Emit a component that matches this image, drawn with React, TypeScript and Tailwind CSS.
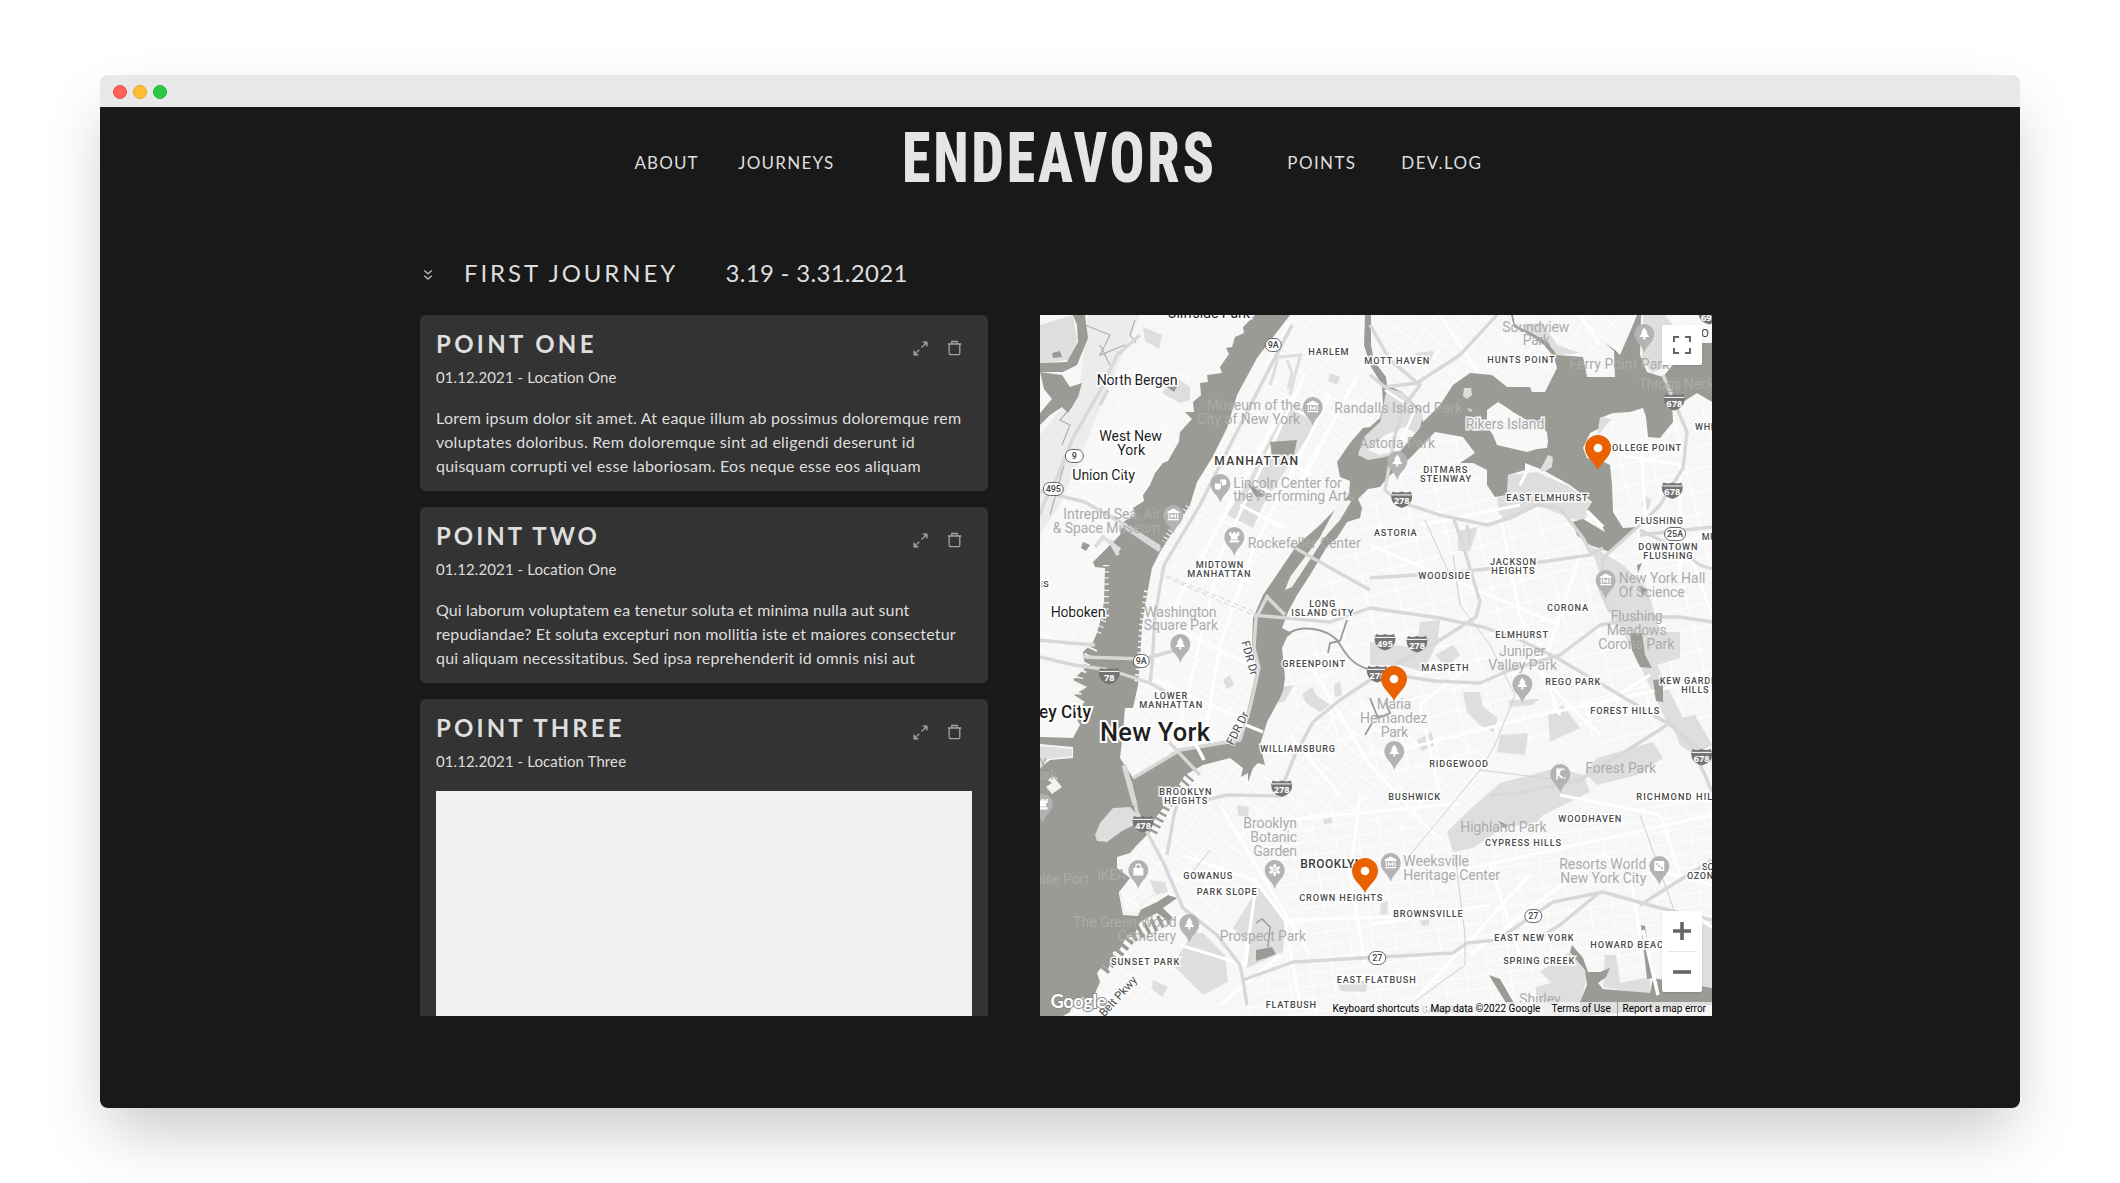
import type { ReactNode } from 'react';

type Label = [text: string, x: number, width: number, y: number];

const TOWNS: Label[] = [
  ['Cliffside Park', 127.3, 82.7, 3],
  ['North Bergen', 56.7, 81, 70],
  ['West New', 59.3, 62.7, 126],
  ['York', 77.3, 28, 140],
  ['Union City', 32.3, 62.7, 165],
  ['Hoboken', 10.7, 55, 302],
];

const AREAS: Label[] = [
  ['HARLEM', 268.3, 40.3, 40.3], ['MOTT HAVEN', 324.3, 65, 49.3], ['HUNTS POINT', 447.3, 67.3, 48.3],
  ['DITMARS', 383.3, 44, 158.3], ['STEINWAY', 380, 51, 167], ['EAST ELMHURST', 466.3, 81.3, 185.7],
  ['COLLEGE POINT', 565.5, 75.5, 136], ['FLUSHING', 594.7, 48.3, 209], ['DOWNTOWN', 598.3, 59.3, 235.3],
  ['FLUSHING', 603.3, 49.3, 244], ['ASTORIA', 334, 42.7, 221], ['MIDTOWN', 155.7, 47.7, 253],
  ['MANHATTAN', 147.3, 63.3, 262], ['LONG', 269.3, 26, 292], ['ISLAND CITY', 251.3, 62, 301.3],
  ['GREENPOINT', 242.3, 62.7, 352], ['LOWER', 114.3, 33, 384], ['MANHATTAN', 99.3, 63, 393],
  ['WILLIAMSBURG', 220.3, 74.7, 437], ['BROOKLYN', 119.3, 52.3, 480], ['HEIGHTS', 124.3, 43, 489],
  ['JACKSON', 450, 46, 250.3], ['HEIGHTS', 451.3, 43.3, 259], ['WOODSIDE', 378.3, 51.7, 264],
  ['CORONA', 507, 41, 296], ['ELMHURST', 455.3, 52.7, 323], ['MASPETH', 381.3, 47.3, 356],
  ['REGO PARK', 505.3, 55, 370], ['FOREST HILLS', 550.3, 69, 399], ['KEW GARDENS', 619.7, 70, 369],
  ['HILLS', 641.3, 27.3, 378], ['RIDGEWOOD', 389.3, 58.7, 452], ['BUSHWICK', 348.3, 51.7, 485],
  ['RICHMOND HILL', 596.3, 82, 485], ['WOODHAVEN', 518.3, 63, 507], ['CYPRESS HILLS', 445, 76, 531],
  ['BROWNSVILLE', 353.3, 69.3, 602], ['EAST NEW YORK', 454.3, 79.3, 626], ['SPRING CREEK', 463.3, 71, 649],
  ['HOWARD BEACH', 550.3, 80, 633], ['GOWANUS', 143.3, 49, 564], ['PARK SLOPE', 156.7, 60, 580],
  ['CROWN HEIGHTS', 259.3, 83, 586], ['SUNSET PARK', 71, 68.3, 650], ['EAST FLATBUSH', 296.7, 79, 668],
  ['FLATBUSH', 225.7, 50.3, 693], ['SOUTH', 662, 30, 555], ['OZONE PARK', 647, 60, 564],
  ['WHITESTONE', 655, 62, 115], ['MURRAY HILL', 661.7, 62, 224.7], ['CANARSIE', 381.7, 48, 698],
];

const PLACES: Label[] = [
  ['Museum of the', 166.7, 93.7, 95], ['City of New York', 157.3, 102.7, 109],
  ['Randalls Island Park', 294.3, 128, 98], ['Soundview', 462.3, 67, 16.5], ['Park', 482.7, 27.3, 30],
  ['Ferry Point Park', 529.3, 100, 53.5], ['Throgs Neck', 598.7, 76, 73.5],
  ['Astoria Park', 319.3, 75.7, 132.5], ['Lincoln Center for', 193.3, 108.5, 172.5],
  ['the Performing Arts', 193.3, 121, 186], ['Rockefeller Center', 207.7, 113, 232.5],
  ['Intrepid Sea, Air', 23.3, 97, 203.5], ['& Space Museum', 12.7, 107.7, 217.5],
  ['Washington', 104.3, 72.3, 301.5], ['Square Park', 103.7, 74.3, 315],
  ['Maria', 336.7, 34.3, 394], ['Hernandez', 320, 67.3, 408], ['Park', 340.7, 27.3, 422],
  ['Juniper', 459, 46.3, 341], ['Valley Park', 448.3, 68.7, 355],
  ['New York Hall', 578.7, 86.7, 268], ['Of Science', 578.7, 66, 282],
  ['Flushing', 570.7, 52, 306], ['Meadows', 566.7, 60, 320], ['Corona Park', 558.3, 76, 334],
  ['Forest Park', 545.3, 70.7, 458], ['Highland Park', 420.3, 86.3, 517],
  ['Weeksville', 363.3, 65.7, 551], ['Heritage Center', 363.3, 96.7, 565],
  ['Resorts World', 519.3, 87, 554], ['New York City', 520.3, 86, 568],
  ['Brooklyn', 203.3, 53.7, 513], ['Botanic', 210.3, 46.7, 527], ['Garden', 213.3, 43.7, 541],
  ['Prospect Park', 179.7, 86.3, 626], ['The Green-Wood', 33.3, 103.3, 612], ['Cemetery', 77.7, 58.3, 626],
  ['IKEA', 57.3, 28.7, 565], ['Cruise Port', -19, 68, 569], ['ty', -6, 12, 451], ['Park', -10, 27.3, 465],
  ['Shirley', 479.3, 41.3, 689],
];

type Glyph = 'tree' | 'museum' | 'castle' | 'masks' | 'flower' | 'bag' | 'dice' | 'golf';
const SPOTS: [number, number, Glyph][] = [
  [272.7, 92, 'museum'], [180.3, 169, 'masks'], [133.3, 200, 'museum'], [194.3, 222, 'castle'],
  [140.3, 329, 'tree'], [604.3, 19, 'tree'], [357.3, 146, 'tree'], [565.7, 265, 'museum'],
  [482.3, 369, 'tree'], [354.3, 436, 'tree'], [520.3, 459, 'golf'], [350.7, 548, 'museum'],
  [619.3, 551, 'dice'], [234.7, 555, 'flower'], [149.3, 609, 'tree'], [98.3, 555, 'bag'], [2.7, 489, 'castle'],
];

const ROUND_SHIELDS: [string, number, number, number][] = [
  ['9A', 233.3, 30, 16], ['9A', 101.3, 346, 16], ['9', 34.3, 141, 18], ['495', 13.3, 174, 20],
  ['25A', 635, 219, 21], ['27', 493.3, 601, 17], ['27', 337.3, 643, 17],
];
const INTERSTATES: [string, number, number][] = [
  ['278', 361.7, 184.5], ['678', 634.3, 87], ['678', 632.3, 175.5], ['78', 69.3, 361], ['495', 345, 327],
  ['278', 377, 329], ['278', 337.3, 359], ['678', 661.7, 442], ['278', 241.7, 473.5], ['478', 103, 509], ['695', 669, 1],
];

const WATER =
  'M215 0 203 12 204 18 195 22 192 32 186 33 189 39 180 52 182 58 167 60 168 67 160 68 161 80 153 87 154 97 145 97 152 104 140 117 139 127 133 137 128 146 123 148 115 158 110 170 103 180 104 186 93 193 95 200 83 207 80 220 70 230 53 247 55 252 65 253 64 287 60 307 57 318 53 327 43 337 45 353 33 365 47 372 34 380 45 387 33 397 40 410 33 423 0 422 0 429 33 432 33 443 10 445 0 453 0 701 23 701 30 697 33 686 43 682 50 690 60 667 57 658 63 650 68 655 73 637 80 634 87 620 94 621 100 607 117 598 128 606 133 603 123 593 137 583 128 580 117 587 100 595 98 601 83 600 79 577 90 563 77 553 77 542 90 538 97 530 110 517 114 505 123 493 122 480 120 475 137 473 145 460 163 450 190 443 203 453 201 462 208 458 208 467 213 453 218 448 225 450 220 430 227 407 240 383 243 376 245 363 242 333 247 322 252 318 242 313 248 297 257 280 270 260 288 230 297 223 307 207 320 203 322 193 318 184 328 174 340 172 347 163 370 143 395 117 423 122 435 138 420 148 433 148 447 155 447 170 455 182 467 180 468 160 485 155 485 148 503 155 530 170 552 187 547 195 563 213 565 217 543 204 532 207 537 220 550 230 570 237 590 220 597 212 583 213 573 197 572 170 570 150 560 145 547 143 543 133 550 118 560 113 560 103 573 98 590 97 603 93 606 102 608 122 620 123 633 107 632 87 643 87 657 78 672 87 672 28 655 28 630 53 623 62 607 57 600 40 601 0 597 0 590 17 580 40 575 35 565 28 574 36 575 62 547 62 543 42 517 40 507 27 490 17 475 10 473 0 471 0 474 12 490 20 504 30 514 42 517 53 505 77 492 77 490 72 467 72 452 60 430 58 413 70 400 90 383 107 380 95 362 77 347 70 346 62 334 46 331 30 331 0 325 0 324 30 330 50 342 70 343 90 340 103 330 112 323 113 310 128 297 147 300 162 310 166 309 180 280 210 257 230 223 280 213 303 212 333 217 353 208 393 200 423 163 430 133 437 113 453 93 463 80 443 83 417 85 393 93 393 98 370 100 347 102 310 107 280 112 253 120 237 150 190 157 167 172 143 187 113 197 80 217 43 250 0Z';

const HIGHWAYS = [
  'M77 40 62 72 33 123 18 160 3 190 0 200', 'M100 20 77 40 M68 75 60 90 M0 176 45 187 82 208 120 232',
  'M0 342 34 350 70 355 110 368 132 380 M-2 325 30 328 55 330 M43 342 104 344 140 334',
  'M90 466 97 497 107 517 123 547 143 593 177 620 200 650 203 665 253 647 340 642 413 638 427 628 457 625 513 587 563 577 620 593 672 605',
  'M203 665 207 690 M187 480 240 481 M243 470 255 440 273 407 300 385 333 363 363 345 397 327 436 302 440 287 423 230 414 205',
  'M213 300 290 307 330 293 400 303 443 312 480 325 517 343 563 370 630 410 667 440 672 445',
  'M250 230 285 250 330 275 M330 263 420 257 480 250 550 240 563 233', 'M226 281 245 300',
  'M360 187 400 200 447 210 470 203 497 190 520 193 543 223 552 240',
  'M623 60 647 117 643 153 620 190 603 207 563 243 560 275 570 297', 'M355 360 395 366 440 368 470 355 520 340 560 310 610 302 640 302 672 307',
  'M450 480 480 478 540 465 580 440 627 410', 'M627 403 650 430 665 460 672 477', 'M457 0 420 40 377 68 345 72 330 60 M330 10 350 45 380 70 365 90 355 120 345 175 362 190',
  'M600 215 640 235 660 250 672 254 M600 220 672 212', 'M427 210 430 230 M560 577 520 610 495 625 M600 590 672 545',
  'M110 368 112 350 115 300 124 250 160 190 185 140 225 62 252 10',
  'M93 463 115 450 140 435 200 425 210 393 219 353 214 333 216 303 228 280 M127 540 134 500 140 480 M138 473 165 485 187 480',
];

const PARKS = [
  '187,200 213,213 223,190 270,118 277,100 250,88 230,123 210,163', '0,10 33,0 37,25 30,45 0,48', '103,12 122,20 119,34 105,26',
  '133,60 150,72 150,85 140,88 122,78', '290,58 300,62 297,70 288,66', '220,570 245,603 243,637 207,653 210,630 193,613',
  '153,617 163,618 185,640 188,667 163,680 133,650', '113,665 128,672 122,682 112,674',
  '550,230 583,250 607,273 620,317 640,317 640,343 617,350 630,377 643,403 627,407 603,357 583,317 567,293 562,265',
  '557,443 613,427 623,443 597,460 557,470 545,458', '460,468 517,453 543,460 550,477 503,500 497,507 463,513 433,533 413,537 407,517 427,497',
  '380,307 400,305 398,327 383,357 360,350 330,350 330,327 377,333', '395,340 413,330 420,340 406,352',
  '423,377 440,377 443,392 458,403 453,417 440,410 427,397', '508,400 523,390 540,413 510,427', '460,420 488,418 485,440 457,437',
  '468,385 500,384 492,390 470,392', '468,160 497,157 530,172 553,190 543,207 530,203 497,190 460,207 457,183 467,180',
  '480,10 503,8 517,30 540,38 517,40 505,27', '375,38 394,36 390,48 380,50', '418,216 438,212 430,236 418,236', '262,379 272,372 276,380 290,390 280,397 266,388',
  '294,370 300,366 302,380 295,382', '183,365 190,360 194,370 187,374', '197,490 209,492 208,502 198,500', '283,505 292,502 292,508 284,509',
  '500,657 530,637 543,645 548,657 540,690 520,701 505,701 495,672 512,668', '565,640 576,640 580,668 610,662 610,680 563,672',
  '663,607 672,608 672,675 650,668', '377,425 392,417 394,430 382,436', '603,180 612,185 608,195 602,192', '603,0 625,0 640,20 630,50 612,58 602,45',
  '298,668 328,665 326,677 300,676', '380,606 389,604 389,610 382,611', '341,588 348,586 347,600 340,599', '110,565 125,567 128,577 115,580', '630,405 655,400 672,430 655,440 640,430', '240,372 254,370 245,386 238,388',
];

const DARK = [
  'M33 0 45 0 48 23 37 50 23 57 0 57 0 48 27 47 38 27 37 10Z', 'M0 57 22 60 30 72 42 68 38 82 28 98 22 92 10 100 0 110 0 98 12 84 4 74Z',
  'M12 38 20 36 22 42 13 43Z', 'M230 127 257 125 254 140 232 141Z', 'M127 72 138 70 134 77Z', 'M207 168 216 174 224 180 216 182Z',
  'M590 318 602 318 605 340 612 353 600 352 592 335Z', 'M613 365 623 364 623 387 616 386Z', 'M216 635 232 632 236 639 226 643 216 646Z',
  'M532 630 543 643 548 657 560 657 570 653 566 662 558 668 563 674 610 678 613 663 672 673 672 690 540 701 540 687 547 670 545 655 530 637Z',
  'M601 610 605 611 613 663 607 664Z M449 660 460 664 475 690 466 688Z', 'M458 506 468 510 464 513Z M597 250 602 248 598 258Z M600 272 607 274 602 281Z', 'M43 227 50 230 46 236 41 233Z',
];

function FitText({ data, className, size }: { data: Label[]; className: string; size: number }) {
  return (
    <g className={className} fontSize={size}>
      {data.map(([t, x, w, y], i) => (
        <text key={i} x={x} y={y} textLength={w}>{t}</text>
      ))}
    </g>
  );
}

function SpotGlyph({ kind }: { kind: Glyph }) {
  switch (kind) {
    case 'tree':
      return <path d="M0-6.5 3.4-1.5H2L5 3H1V5.5H-1V3H-5L-2-1.5H-3.4Z" />;
    case 'museum':
      return (
        <>
          <path d="M0-6.5-6-3.2V-2H6V-3.2Z M-5.5 4H5.5V5.3H-5.5Z M-5-1.4H-3.8V3.5H-5Z M3.8-1.4H5V3.5H3.8Z" />
          <path d="M-2 3.2V-.4L0 1.8 2-.4V3.2" fill="none" stroke="#fff" strokeWidth="1.2" />
        </>
      );
    case 'castle':
      return <path d="M-5-5H-3V-3.5H-1V-5H1V-3.5H3V-5H5V-1H3.2L3.6 2.5H-3.6L-3.2-1H-5Z M-4.8 3.3H4.8V5.5H-4.8Z" />;
    case 'masks':
      return <path d="M-5.5-.5H.6V3A3 2.6 0 0 1-5.5 3Z M0-4.5H6V-.8A3 2.6 0 0 1 1.6 1.2V-1.4H0Z" />;
    case 'flower':
      return (
        <>
          {[0, 60, 120, 180, 240, 300].map((a) => (
            <ellipse key={a} cx="0" cy="-3.7" rx="1.5" ry="2.3" transform={`rotate(${a})`} />
          ))}
          <circle r="1.1" />
        </>
      );
    case 'bag':
      return (
        <>
          <path d="M-5-2H5V5.5H-5Z" />
          <path d="M-2.4-2V-3.5A2.4 2.4 0 0 1 2.4-3.5V-2" fill="none" stroke="#fff" strokeWidth="1.3" />
        </>
      );
    case 'dice':
      return (
        <>
          <rect x="-5" y="-5" width="10" height="10" rx="1" />
          <g fill="#b3b3b3"><circle cx="-2.5" cy="-2" r="1.1" /><circle r="1.1" /><circle cx="2.5" cy="2.2" r="1.1" /></g>
        </>
      );
    case 'golf':
      return <path d="M-4-5.5H4V-4H1L-1 0 3 3.5 2 5 -2.4 1.6V5.5H-4Z M3.5 3.5H5V5H3.5Z" />;
  }
}

function Marker({ x, y }: { x: number; y: number }) {
  return (
    <g transform={`translate(${x} ${y})`}>
      <path d="M0 22C-3 14.5-13 9-13 0A13 13 0 0 1 13 0C13 9 3 14.5 0 22Z" fill="#ea6200" />
      <circle r="4.3" fill="#fff" />
    </g>
  );
}

function CityMap() {
  return (
    <svg viewBox="0 0 672 701" className="block h-full w-full font-['Roboto',sans-serif]">
      <defs>
        <pattern id="manhattan" width="17" height="7" patternUnits="userSpaceOnUse" patternTransform="rotate(29)">
          <path d="M0 0H17M0 0V7" stroke="#fff" strokeWidth="1.6" />
        </pattern>
        <pattern id="jersey" width="5" height="14" patternUnits="userSpaceOnUse" patternTransform="rotate(28)">
          <path d="M0 0H5M0 0V14" stroke="#fff" strokeWidth="1.4" />
        </pattern>
        <pattern id="queens" width="31" height="22" patternUnits="userSpaceOnUse" patternTransform="rotate(-14)">
          <path d="M0 0H31M0 0V22" stroke="#fff" strokeWidth="2.4" />
        </pattern>
        <pattern id="bushwick" width="24" height="15" patternUnits="userSpaceOnUse" patternTransform="rotate(38)">
          <path d="M0 0H24M0 0V15" stroke="#fff" strokeWidth="1.8" />
        </pattern>
        <pattern id="brooklyn" width="22" height="13" patternUnits="userSpaceOnUse" patternTransform="rotate(-8)">
          <path d="M0 0H22M0 0V13" stroke="#fff" strokeWidth="1.8" />
        </pattern>
      </defs>
      <rect width="672" height="701" fill="#f7f7f7" />
      <path d="M48 0 100 0 80 45 20 190 0 220V120L40 70Z" fill="#ececec" />
      <path d="M40 8 70 20 60 40 85 30 M60 30 70 50 M22 130 30 110 20 105 33 90 M10 200 24 150 M95 5 90 20 96 28" fill="none" stroke="#b0b0ab" strokeWidth="1.2" />
      <path d="M94 45 150 60 130 135 30 330 0 340V230L60 120Z" fill="url(#jersey)" />
      <path d="M250 0 325 0 340 100 297 147 300 170 213 303 215 350 200 423 133 437 93 463 85 400 112 253Z" fill="url(#manhattan)" />
      <path d="M331 0H672V60L460 60 383 100Z" fill="url(#bushwick)" />
      <path d="M245 330 330 190 400 110 672 90V430H460L330 470 245 380Z" fill="url(#queens)" />
      <path d="M220 420 330 380 460 440 420 530 300 500 200 560 150 640 90 701H0L130 480Z" fill="url(#bushwick)" />
      <path d="M200 500 330 490 420 530 672 480V640L400 701H200L250 600Z" fill="url(#brooklyn)" />
      <g fill="#dedede">{PARKS.map((p) => <polygon key={p} points={p} />)}</g>
      <path d="M230 70 234 58 238 42 262 40 M250 80 255 60 260 42 M247 45 252 58 248 74" fill="none" stroke="#dedede" strokeWidth="3" />
      <g fill="none" stroke="#fff" strokeWidth="3">
        <path d="M232 138 272 160 M214 168 252 190 M200 190 244 212 M250 92 275 105 M165 245 213 268 M130 310 208 350 M115 365 205 405" />
        <path d="M245 90 130 300 M265 60 180 240 170 285 140 410 M290 80 215 230 180 330 165 420 M318 60 260 170" />
        <path d="M142 540 215 565 245 605 260 690 M180 490 270 640 M320 480 310 560 325 650 M330 610 450 590 M245 605 420 600 M250 505 420 488 M216 570 205 650 140 630 M240 640 180 690 M270 350 330 450 395 520 M250 420 300 480" />
        <path d="M380 210 480 190 M330 230 520 310 M460 200 480 300 520 400 M340 440 500 400 640 370 M400 480 380 390 430 350 M540 240 500 360 560 420 M400 560 672 500 M430 640 560 540 672 570 M370 690 490 560 M450 550 480 640 M520 480 620 500 640 560 M590 560 600 620 M600 110 605 200 M640 150V260 M580 140 640 150 M400 0 440 60 M540 0 560 30 M480 170 490 150 M640 210 672 300 M545 400 610 360" />
        <path d="M603 610 620 701M547 195 565 215" />
      </g>
      <path d={WATER} fill="#9a9b94" />
      <g fill="#9a9b94">{DARK.map((d) => <path key={d} d={d} />)}</g>
      <path d="M249 318C262 310 285 313 297 325C305 337 310 350 331 355M300 326 290 328 288 338M300 326 307 305M330 383 338 403 350 398 346 388M325 420 332 408" fill="none" stroke="#9a9b94" strokeWidth="1.8" />
      <path d="M216 608 222 604 230 612 228 632" fill="none" stroke="#9a9b94" strokeWidth="1.5" />
      <g fill="none" stroke="#f4f4f4" strokeWidth="10">
        <path d="M109 276 104 312 102 345 99 368" strokeDasharray="1.6 4" />
        <path d="M53 333 38 362 36 382 34 396" strokeDasharray="2 6" />
        <path d="M150 193 138 208 126 228" strokeDasharray="1.2 3" />
        <path d="M66 250 66 300 58 318" strokeDasharray="1.2 5" strokeWidth="6" />
      </g>
      <g fill="none" stroke="#9a9b94" strokeWidth="11">
        <path d="M63 655 90 622 128 603" strokeDasharray="3.5 4" strokeWidth="13" />
        <path d="M112 517 126 490 150 462" strokeDasharray="2.5 4" />
        <path d="M208 30 186 68 160 95" strokeDasharray="1.5 6" strokeWidth="8" />
      </g>
      <path d="M80 235 63 222 55 232M70 225 78 240" fill="none" stroke="#dedede" strokeWidth="4" />
      <path d="M300 185 312 185 300 205 285 222 252 272 245 275 250 262 280 222Z" fill="#f4f4f4" />
      <path d="M347 73 362 77 383 100 380 113 360 137 345 142 328 145 318 140 323 123 340 107 343 92Z" fill="#dedede" />
      <path d="M345 120 365 112 375 118 360 135 340 140 328 135Z" fill="#f8f8f8" />
      <path d="M345 75 375 95 355 140" fill="none" stroke="#fff" strokeWidth="2.5" />
      <path d="M447 95 458 87 466 92 473 97 490 107 500 111 507 117 508 127 507 133 497 134 487 137 457 130 453 120 447 112Z" fill="#f8f8f8" />
      <path d="M424 73 431 73 432 80 427 84 423 81Z M427 93 433 95 430 97Z M560 102 572 104 563 114 557 122Z M500 155 508 140 513 142 512 152 504 157Z" fill="#dedede" />
      <path d="M55 520 60 508 73 493 90 492 100 502 94 510 82 516 67 527 57 526Z" fill="#dedede" />
      <path d="M80 577 84 598 98 598 103 588 116 578" fill="none" stroke="#f0f0f0" strokeWidth="2.5" />
      <path d="M0 431 32 434 32 441 8 444 0 452Z" fill="#dedede" />
      <path d="M6 472 16 465 22 472 12 479Z M8 465 13 460 18 464 12 468Z" fill="#f4f4f4" />
      <path d="M573 108 603 95 605 120 573 145Z" fill="#f8f8f8" />
      <g fill="none" stroke="#d8d8d8" strokeWidth="3.4" strokeLinejoin="round">
        {HIGHWAYS.map((d) => <path key={d} d={d} />)}
        <path d="M83 210 120 235 M95 490 84 450" strokeWidth="5" />
        <path d="M127 425 160 460" />
      </g>
      <path d="M155 428 164 445M206 410 223 417M547 196 563 212M660 604 672 612M603 615 618 680" stroke="#fff" strokeWidth="3.5" fill="none" />
      <path d="M125 262 213 300M120 258 213 296" stroke="#dcdcdc" strokeWidth="1.2" strokeDasharray="5 3" />
      <path d="M413 240 420 290 450 330 475 380 455 430 440 455 370 540M440 455 520 465M415 540 425 620 425 650 370 690M600 500 650 640M385 205 410 260M150 560 170 535" fill="none" stroke="#cfcfcf" strokeWidth="1" />

      {SPOTS.map(([x, y, kind], i) => (
        <g key={i} transform={`translate(${x} ${y})`} fill="#fff">
          <path d="M0 19C-2 11-10 8-10 0A10 10 0 0 1 10 0C10 8 2 11 0 19Z" fill="#b3b3b3" />
          <SpotGlyph kind={kind} />
        </g>
      ))}
      <FitText data={PLACES} size={14} className="fill-[#ababab]" />
      <FitText data={[['Rikers Island', 425.7, 78.7, 113.7]]} size={14} className="fill-[#a8a8a8] stroke-[#f4f4f4] stroke-3 [paint-order:stroke]" />
      <FitText data={AREAS} size={9.2} className="fill-[#4a4a4a] stroke-white/90 stroke-3 font-medium [paint-order:stroke]" />
      <FitText data={[['MANHATTAN', 174.3, 83.7, 150], ['BROOKLYN', 260.3, 63, 553]]} size={12} className="fill-[#3c3c3c] stroke-white/90 stroke-3 font-medium [paint-order:stroke]" />
      <FitText data={TOWNS} size={14.3} className="fill-[#1f1f1f] stroke-white stroke-3 [paint-order:stroke]" />
      <FitText data={[['OC', 661, 18, 22], ['rs', 1, 8, 272]]} size={11.5} className="fill-[#3c3c3c] stroke-white stroke-3 [paint-order:stroke]" />
      <FitText data={[['ey City', -1, 52, 402.7]]} size={17.5} className="fill-[#1f1f1f] stroke-white stroke-4 font-medium [paint-order:stroke]" />
      <FitText data={[['New York', 60, 110, 426]]} size={25.5} className="fill-[#1f1f1f] stroke-white stroke-4 font-medium [paint-order:stroke]" />
      <g fontSize="11.5" textAnchor="middle" className="fill-[#4a4a4a] stroke-white/80 stroke-2 [paint-order:stroke]">
        <text transform="translate(206 344) rotate(74)">FDR Dr</text>
        <text transform="translate(201 415) rotate(-63)">FDR Dr</text>
        <text transform="translate(81 684) rotate(-48)">Belt Pkwy</text>
      </g>
      {ROUND_SHIELDS.map(([t, x, y, w], i) => (
        <g key={i} transform={`translate(${x} ${y})`}>
          <rect x={-w / 2} y="-6.5" width={w} height="13" rx="6.5" fill="#fff" stroke="#666" />
          <text y="3.2" textAnchor="middle" fontSize="9" fill="#444" className="font-medium">{t}</text>
        </g>
      ))}
      {INTERSTATES.map(([t, x, y], i) => (
        <g key={i} transform={`translate(${x} ${y})`}>
          <path d="M-9-8Q-4.5-6 0-8 4.5-6 9-8L10.5-4Q11 5.5 0 8.5-11 5.5-10.5-4Z" fill="#757575" />
          <path d="M-10-4.6H10" stroke="#fff" strokeWidth="1" />
          <text y="4.6" textAnchor="middle" fontSize="9.3" fill="#fff" className="font-['Open_Sans',sans-serif] font-bold">{t}</text>
        </g>
      ))}
      <Marker x={558} y={133} />
      <Marker x={354} y={364} />
      <Marker x={325} y={556} />
      <text x="10.5" y="693" textLength="56" fontSize="18.5" className="fill-white stroke-[#8c8c8c] stroke-2 font-['Lato',sans-serif] font-bold [paint-order:stroke]">Google</text>
    </svg>
  );
}

function ExpandIcon() {
  return (
    <svg viewBox="0 0 15 15" className="size-[15px]" fill="none" stroke="currentColor" strokeWidth="1.3">
      <path d="M8.5 6.5 13 2M6.2 8.8 2 13" />
      <path d="M9.6 1.2H13.8V5.4M1.2 9.6V13.8H5.4" />
      <path d="M11 1.2H13.8V4ZM1.2 11V13.8H4Z" fill="currentColor" strokeWidth=".6" />
    </svg>
  );
}

function TrashIcon() {
  return (
    <svg viewBox="0 0 15 16" className="h-4 w-[15px]" fill="none" stroke="currentColor" strokeWidth="1.3">
      <path d="M.8 4H14.2M4.8 4V1.5H10.2V4" />
      <path d="M2.2 4V13.2A1.5 1.5 0 0 0 3.7 14.7H11.3A1.5 1.5 0 0 0 12.8 13.2V4" />
    </svg>
  );
}

function PointCard({ title, titleClass, meta, children, fixed = true }: {
  title: string; titleClass: string; meta: string; children: ReactNode; fixed?: boolean;
}) {
  return (
    <article className={fixed ? 'h-44 shrink-0 rounded-md bg-[#333333] px-4 pt-[13px]' : 'shrink-0 rounded-md bg-[#333333] px-4 pt-[13px] pb-4'}>
      <div className="flex justify-between">
        <h2 className={`text-2xl leading-8 font-bold whitespace-nowrap ${titleClass}`}>{title}</h2>
        <div className="mt-3 mr-2.5 flex h-4 items-center gap-[19px] text-[#a3a3a3]">
          <ExpandIcon />
          <TrashIcon />
        </div>
      </div>
      <p className="mt-[5px] text-[15px] leading-6 tracking-[0.1px]">{meta}</p>
      {children}
    </article>
  );
}

export default function App() {
  return (
    <div className="h-[1183px] w-[2120px] overflow-hidden bg-white px-[100px] pt-[75px] font-['Lato',sans-serif] text-[#dedede]">
      <div className="flex h-[1033px] flex-col rounded-lg shadow-[0_30px_60px_-8px_rgba(0,0,0,0.22)]">
        <div className="flex h-8 shrink-0 items-center gap-[6.6px] rounded-t-lg bg-[#e8e8e8] pt-0.5 pl-[13.3px]">
          <span className="size-[13.4px] rounded-full border border-[#e8524a] bg-[#ff5f57]" />
          <span className="size-[13.4px] rounded-full border border-[#e5a52c] bg-[#febc2e]" />
          <span className="size-[13.4px] rounded-full border border-[#22b33a] bg-[#28c840]" />
        </div>

        <div className="flex-1 rounded-b-lg bg-[#191919]">
          <header className="flex h-[150px] items-start pt-[15px] pl-[534.5px] text-[17px] leading-6 whitespace-nowrap">
            <a className="mt-[28.5px] w-[103.8px] tracking-[1.1px]">ABOUT</a>
            <a className="mt-[28.5px] w-[163.5px] tracking-[1.25px]">JOURNEYS</a>
            <h1 className="w-[385.5px] origin-left scale-x-[0.817] font-['Roboto_Condensed','Roboto',sans-serif] text-[71px] leading-none font-extrabold tracking-[3.4px] text-[#e5e5e5]">ENDEAVORS</h1>
            <a className="mt-[28.5px] w-[114px] tracking-[1.4px]">POINTS</a>
            <a className="mt-[28.5px] tracking-[1.4px]">DEV.LOG</a>
          </header>

          <div className="flex h-8 items-center pl-[323px] text-2xl leading-8 whitespace-nowrap">
            <svg viewBox="0 0 10 12" className="mt-[3px] h-3 w-2.5" fill="none" stroke="#b5b5b5" strokeWidth="1.4">
              <path d="M1.2 1.5 5 4.8 8.8 1.5M1.2 6.8 5 10.1 8.8 6.8" />
            </svg>
            <span className="ml-[31px] w-[261.5px] tracking-[2.9px]">FIRST JOURNEY</span>
            <span className="tracking-[0.3px]">3.19 - 3.31.2021</span>
          </div>

          <main className="mt-[26px] flex h-[701px] gap-[52px] pl-[320px]">
            <section className="flex w-[568px] flex-col gap-4 overflow-hidden">
              <PointCard title="POINT ONE" titleClass="tracking-[3.3px]" meta="01.12.2021 - Location One">
                <div className="mt-[17px] text-base leading-6 whitespace-nowrap">
                  <p className="tracking-[0.26px]">Lorem ipsum dolor sit amet. At eaque illum ab possimus doloremque rem</p>
                  <p className="tracking-[0.26px]">voluptates doloribus. Rem doloremque sint ad eligendi deserunt id</p>
                  <p className="tracking-[0.24px]">quisquam corrupti vel esse laboriosam. Eos neque esse eos aliquam</p>
                </div>
              </PointCard>
              <PointCard title="POINT TWO" titleClass="tracking-[2.95px]" meta="01.12.2021 - Location One">
                <div className="mt-[17px] text-base leading-6 whitespace-nowrap">
                  <p className="tracking-[0.13px]">Qui laborum voluptatem ea tenetur soluta et minima nulla aut sunt</p>
                  <p className="tracking-[0.165px]">repudiandae? Et soluta excepturi non mollitia iste et maiores consectetur</p>
                  <p className="tracking-[0.186px]">qui aliquam necessitatibus. Sed ipsa reprehenderit id omnis nisi aut</p>
                </div>
              </PointCard>
              <PointCard title="POINT THREE" titleClass="tracking-[3.1px]" meta="01.12.2021 - Location Three" fixed={false}>
                <div className="mt-[18px] h-[300px] bg-[#f0f0f0]" />
              </PointCard>
            </section>

            <section className="relative h-[701px] w-[672px] overflow-hidden font-['Roboto',sans-serif]">
              <CityMap />
              <button className="absolute top-2.5 right-2.5 flex size-10 items-center justify-center rounded-xs bg-white shadow">
                <svg viewBox="0 0 18 18" className="size-[18px]" fill="#666666">
                  <path d="M0 0V6H2V2H6V0ZM16 0H12V2H16V6H18V0ZM16 16H12V18H18V12H16ZM2 12H0V18H6V16H2Z" />
                </svg>
              </button>
              <div className="absolute top-[596px] right-2.5 flex h-[81px] w-10 flex-col items-center rounded-xs bg-white shadow">
                <svg viewBox="0 0 18 18" className="my-[11px] size-[18px]" fill="#666666"><path d="M7.2 0H10.8V7.2H18V10.8H10.8V18H7.2V10.8H0V7.2H7.2Z" /></svg>
                <div className="h-px w-[30px] bg-[#e6e6e6]" />
                <svg viewBox="0 0 18 18" className="my-[11px] size-[18px]" fill="#666666"><path d="M0 7.2H18V10.8H0Z" /></svg>
              </div>
              <div className="absolute right-0 bottom-0 flex h-3.5 items-center bg-[#f5f5f5]/75 text-[10px] leading-[14px] whitespace-nowrap text-black">
                <span className="w-[97px] pl-1">Keyboard shortcuts</span>
                <span className="w-[5px] text-[8px]">:</span>
                <span className="w-[121px] tracking-[0.05px]">Map data ©2022 Google</span>
                <span className="h-full w-[66px] border-r border-[#999999]">Terms of Use</span>
                <span className="w-[94.5px] pl-[5px]">Report a map error</span>
              </div>
            </section>
          </main>
        </div>
      </div>
    </div>
  );
}
